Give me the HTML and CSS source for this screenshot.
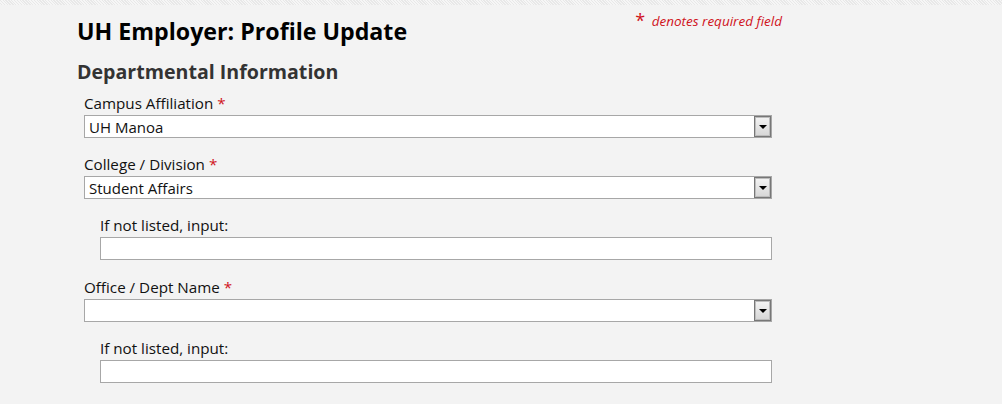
FILE: index.html
```html
<!DOCTYPE html>
<html>
<head>
<meta charset="utf-8">
<link rel="stylesheet" href="styles.css">
</head>
<body>
<div class="topband"></div>
<div class="page">
  <div class="head">
    <h1 class="title">UH Employer: Profile Update</h1>
    <p class="req-note"><span class="star">*</span> denotes required field</p>
  </div>
  <h2 class="section">Departmental Information</h2>
  <div class="form">
    <div class="field">
      <label class="label">Campus Affiliation <span class="req">*</span></label>
      <div class="select-wrap">
        <select class="select"><option>UH Manoa</option></select>
        <span class="drop"><span class="arrow"></span></span>
      </div>
    </div>
    <div class="field">
      <label class="label">College / Division <span class="req">*</span></label>
      <div class="select-wrap">
        <select class="select"><option>Student Affairs</option></select>
        <span class="drop"><span class="arrow"></span></span>
      </div>
    </div>
    <div class="field sub">
      <label class="label">If not listed, input:</label>
      <input class="text" type="text">
    </div>
    <div class="field">
      <label class="label">Office / Dept Name <span class="req">*</span></label>
      <div class="select-wrap">
        <select class="select"><option></option></select>
        <span class="drop"><span class="arrow"></span></span>
      </div>
    </div>
    <div class="field sub">
      <label class="label">If not listed, input:</label>
      <input class="text" type="text">
    </div>
  </div>
</div>
</body>
</html>
```
FILE: styles.css
```css
* { box-sizing: border-box; }
html, body { margin: 0; padding: 0; }
body {
  background: #f3f3f3;
  font-family: "Open Sans", "DejaVu Sans", sans-serif;
  color: #111;
  width: 1002px;
  height: 404px;
  overflow: hidden;
}
.topband {
  height: 5px;
  background-color: #eeeeee;
  background-image: repeating-linear-gradient(45deg, #f6f6f6 0 1px, #e8e8e8 1px 2px);
}
.page {
  padding-left: 77px;
  width: 860px;
}
.head {
  display: flex;
  justify-content: space-between;
  align-items: flex-start;
  width: 705px;
}
.title {
  margin: 11px 0 0 0;
  font-size: 23.2px;
  font-weight: 700;
  line-height: 30px;
  color: #000;
}
.req-note {
  margin: 6px 0 0 0;
  font-size: 13.5px;
  font-style: italic;
  color: #d0121b;
  line-height: 18px;
}
.req-note .star {
  font-style: normal;
  font-size: 18px;
  margin-right: 3px;
  vertical-align: -1px;
}
.section {
  margin: 13px 0 0 0;
  font-size: 19.6px;
  font-weight: 700;
  line-height: 26px;
  color: #333;
}
.form {
  padding-left: 7px;
  margin-top: 8px;
  width: 695px;
  display: flex;
  flex-direction: column;
  gap: 16px;
}
.field {
  display: flex;
  flex-direction: column;
}
.field.sub {
  padding-left: 16px;
}
.field.sub + .field {
  margin-top: 1px;
}
.label {
  font-size: 15.2px;
  line-height: 21px;
  color: #111;
  height: 22px;
}
.req { color: #d0121b; }
.select-wrap {
  position: relative;
  width: 688px;
  height: 23px;
}
.select {
  appearance: none;
  -webkit-appearance: none;
  width: 100%;
  height: 23px;
  margin: 0;
  border: 1px solid #a7a7a7;
  background: #fff;
  font-family: "Open Sans", "DejaVu Sans", sans-serif;
  font-size: 15px;
  color: #111;
  padding: 0 0 0 4px;
  border-radius: 0;
  line-height: 20px;
}
.drop {
  position: absolute;
  right: 1px;
  top: 1px;
  width: 17px;
  height: 21px;
  border: 1px solid #777;
  box-shadow: inset 0 0 0 1px #bdbdbd;
  background: linear-gradient(#f4f4f4, #d6d6d6);
  display: flex;
  align-items: center;
  justify-content: center;
}
.arrow {
  width: 0;
  height: 0;
  border-left: 4px solid transparent;
  border-right: 4px solid transparent;
  border-top: 4px solid #000;
  margin-top: 1px;
}
.text {
  width: 672px;
  height: 23px;
  border: 1px solid #a7a7a7;
  background: #fff;
  margin: 0;
  padding: 0;
  border-radius: 0;
}
```
